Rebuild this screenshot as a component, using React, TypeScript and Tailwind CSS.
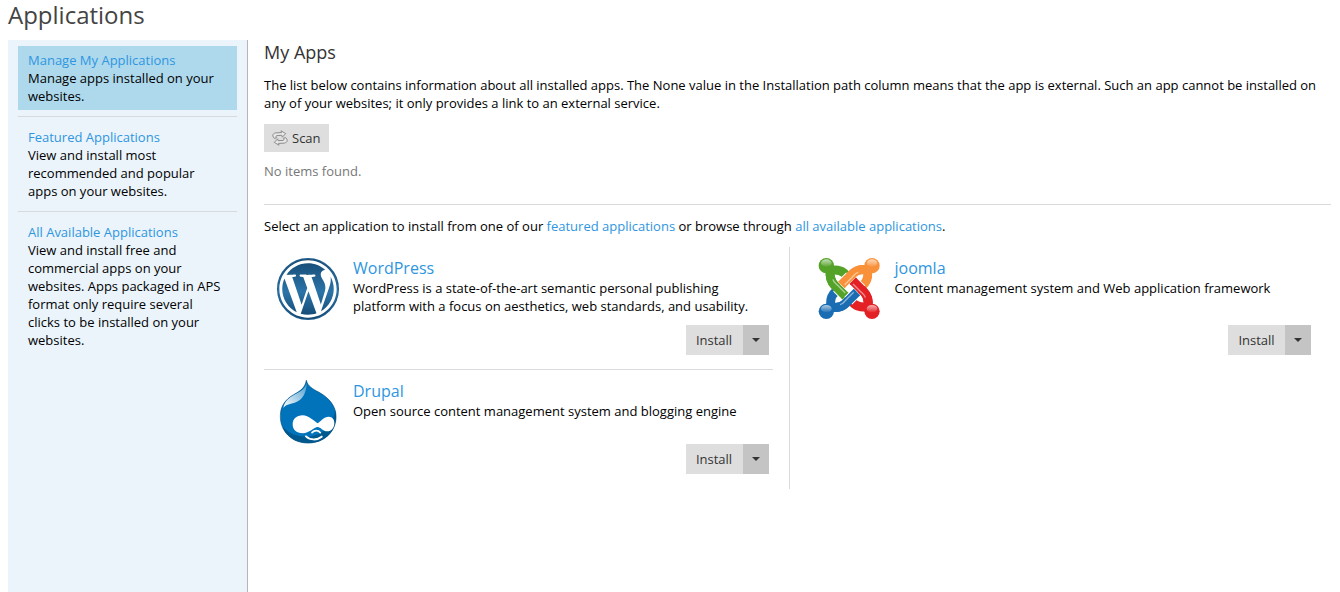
import type { ReactNode } from 'react'
import { FaWordpress } from 'react-icons/fa'

interface NavEntry {
  title: string
  text: string
  active?: boolean
}

interface AppEntry {
  name: string
  text: string
  logo: ReactNode
  left: boolean
  divider: boolean
}

const navEntries: NavEntry[] = [
  {
    title: 'Manage My Applications',
    text: 'Manage apps installed on your websites.',
    active: true,
  },
  {
    title: 'Featured Applications',
    text: 'View and install most recommended and popular apps on your websites.',
  },
  {
    title: 'All Available Applications',
    text: 'View and install free and commercial apps on your websites. Apps packaged in APS format only require several clicks to be installed on your websites.',
  },
]

function WordPressLogo() {
  return (
    <svg viewBox="0 0 64 64" className="size-16" aria-hidden="true">
      <defs>
        <linearGradient id="wp" x1="0" y1="0" x2="0" y2="1">
          <stop offset="0" stopColor="#164a73" />
          <stop offset="0.55" stopColor="#2a74a8" />
          <stop offset="1" stopColor="#13466f" />
        </linearGradient>
      </defs>
      <circle cx="32" cy="32" r="30" fill="#fff" />
      <circle cx="32" cy="32" r="30.2" fill="none" stroke="#1f5e8e" strokeWidth="1.6" />
      <FaWordpress x="1" y="1" size={62} fill="url(#wp)" />
    </svg>
  )
}

function DrupalLogo() {
  return (
    <svg viewBox="24 24 192 192" className="size-16" aria-hidden="true">
      <defs>
        <clipPath id="drop">
          <path d="M115 25C119 43 133 50 153 61C185 79 204 103 204 134C204 180 168 213 120 213C72 213 37 179 37 132C37 103 52 82 77 68C98 56 111 48 115 25Z" />
        </clipPath>
        <linearGradient id="shine" x1="1" y1="0" x2="0" y2="1">
          <stop offset="0" stopColor="#fff" stopOpacity="0.3" />
          <stop offset="1" stopColor="#fff" />
        </linearGradient>
      </defs>
      <g clipPath="url(#drop)">
        <rect x="30" y="20" width="180" height="200" fill="#0073ba" />
        <path d="M204 95C202 150 170 192 118 194C88 195 62 184 44 164C54 200 90 218 125 215C190 212 215 160 204 95Z" fill="#00598e" />
        <path d="M116 33C115 64 104 84 80 92C64 96 52 98 46 108C50 88 63 75 80 67C99 58 112 50 116 33Z" fill="url(#shine)" />
      </g>
      <path d="M115 25C119 43 133 50 153 61C185 79 204 103 204 134C204 180 168 213 120 213C72 213 37 179 37 132C37 103 52 82 77 68C98 56 111 48 115 25Z" fill="none" stroke="#004f80" strokeWidth="2" />
      <path d="M104 130C122 130 138 147 149 154C158 148 168 134 182 134C194 134 199 143 199 153C199 168 190 178 178 178C165 178 157 165 149 165C138 165 124 184 104 184C85 184 74 173 74 157C74 141 86 130 104 130Z" fill="#fff" />
      <path d="M132 182C139 174 151 174 157 182" fill="none" stroke="#fff" strokeWidth="5" strokeLinecap="round" />
      <path d="M114 193C126 205 148 205 161 194" fill="none" stroke="#fff" strokeWidth="6" strokeLinecap="round" />
    </svg>
  )
}

const joomlaArms = [
  { color: '#55a229', angle: 0 },
  { color: '#f9913a', angle: 90 },
  { color: '#e32125', angle: 180 },
  { color: '#1a6db3', angle: 270 },
]

function JoomlaLogo() {
  return (
    <svg viewBox="25 21 192 192" className="size-16" aria-hidden="true">
      <defs>
        <linearGradient id="gloss" x1="0" y1="0" x2="0" y2="1">
          <stop offset="0" stopColor="#fff" stopOpacity="0.65" />
          <stop offset="1" stopColor="#fff" stopOpacity="0.05" />
        </linearGradient>
      </defs>
      {/* the same arm is turned a quarter for each colour, hooks first and bands on top */}
      {joomlaArms.map(({ color, angle }) => (
        <g key={color} transform={`rotate(${angle} 118.5 115.5)`} fill="none">
          <path d="M62 62C59 84 64 95 75 106L107 138" stroke={color} strokeWidth="27" />
          <path d="M58 62C80 57 92 60 102 68L108 74" stroke={color} strokeWidth="27" />
        </g>
      ))}
      {joomlaArms.map(({ color, angle }) => (
        <g key={color} transform={`rotate(${angle} 118.5 115.5)`} fill="none">
          <path d="M82 113L105 136" stroke="#fff" strokeWidth="33" />
          <path d="M62 62C59 84 64 95 75 106L108 139" stroke={color} strokeWidth="27" />
          <path d="M70 88C71 96 77 99 83 105L107 129" stroke="#fff" strokeOpacity="0.5" strokeWidth="4" />
        </g>
      ))}
      {joomlaArms.map(({ color, angle }) => (
        <circle key={color} cx="50" cy="47" r="23" fill={color} transform={`rotate(${angle} 118.5 115.5)`} />
      ))}
      {[[50, 39], [187, 39], [50, 176], [187, 176]].map(([x, y]) => (
        <ellipse key={`${x}-${y}`} cx={x} cy={y} rx="16" ry="11" fill="url(#gloss)" />
      ))}
    </svg>
  )
}

const apps: AppEntry[] = [
  {
    name: 'WordPress',
    text: 'WordPress is a state-of-the-art semantic personal publishing platform with a focus on aesthetics, web standards, and usability.',
    logo: <WordPressLogo />,
    left: true,
    divider: true,
  },
  {
    name: 'joomla',
    text: 'Content management system and Web application framework',
    logo: <JoomlaLogo />,
    left: false,
    divider: false,
  },
  {
    name: 'Drupal',
    text: 'Open source content management system and blogging engine',
    logo: <DrupalLogo />,
    left: true,
    divider: false,
  },
]

function ScanIcon() {
  return (
    <svg viewBox="0 0 16 16" className="size-4" fill="#e8e8e8" stroke="#8c8c8c" strokeLinejoin="round" aria-hidden="true">
      <path d="M2.2 8.300C-.8 5 1.500 2.800 5 2.800L9.500 2.600L9 .8L13.700 3.600L10.300 7.200L9.900 5.300L6 5.500C3.800 5.600 3.300 6.700 4.500 8Z" />
      <path d="M13.800 7.700C16.800 11 14.500 13.200 11 13.200L6.500 13.400L7 15.200L2.300 12.400L5.700 8.800L6.100 10.700L10 10.500C12.200 10.400 12.700 9.300 11.500 8Z" />
    </svg>
  )
}

function AppCard({ app }: { app: AppEntry }) {
  return (
    <div className={`px-4 ${app.left ? 'border-r border-[#dadae0]' : ''}`}>
      <div className={`flex h-full flex-col border-b pt-2.5 pb-3.5 ${app.divider ? 'border-[#dadae0]' : 'border-transparent'}`}>
        <div className="flex flex-1 gap-[13px] pl-3">
          <div className="shrink-0">{app.logo}</div>
          <div className="pr-3 pb-2.5">
            <h3 className="text-base leading-[22px]">
              <a href="#" className="text-[#2e96e0]">{app.name}</a>
            </h3>
            <p>{app.text}</p>
          </div>
        </div>
        <div className="flex justify-end pr-1 text-[#333]">
          <button className="h-[30px] w-[57px] bg-[#dedede]">Install</button>
          <button aria-label={`More options for ${app.name}`} className="flex h-[30px] w-[26px] items-center justify-center bg-[#c4c4c4]">
            <svg viewBox="0 0 8 4" className="h-1 w-2" aria-hidden="true">
              <path d="M0 0H8L4 4Z" fill="#333" />
            </svg>
          </button>
        </div>
      </div>
    </div>
  )
}

export default function App() {
  return (
    <div className="flex min-h-screen flex-col bg-white pl-2 font-['Open_Sans',sans-serif] text-[13px] leading-[18px] text-black">
      <h1 className="pb-2.5 text-2xl leading-[30px] text-[#444]">Applications</h1>

      <div className="flex flex-1">
        <nav className="w-60 shrink-0 border-r border-[#b5b5bb] bg-[#ebf4fb] px-2.5">
          {navEntries.map((entry) => (
            <div key={entry.title} className="border-b border-[#dadada] py-1.5 last:border-b-0">
              <div className={`px-2.5 py-[5px] ${entry.active ? 'bg-[#aed9ec]' : ''}`}>
                <a href="#" className="block text-[#2e96e0]">{entry.title}</a>
                <p>{entry.text}</p>
              </div>
            </div>
          ))}
        </nav>

        <main className="min-w-0 flex-1 pr-[9px] pl-4">
          <h2 className="text-lg leading-6 text-[#333]">My Apps</h2>
          <p className="mt-3">
            The list below contains information about all installed apps. The None value in the Installation path column
            means that the app is external. Such an app cannot be installed on any of your websites; it only provides a
            link to an external service.
          </p>
          <button className="mt-3 flex h-7 items-center gap-1 bg-[#dedede] px-2 text-[#333]">
            <ScanIcon />
            Scan
          </button>
          <p className="mt-2.5 text-[#777]">No items found.</p>

          <section className="mt-6 border-t border-[#dadada] pt-3">
            <p>
              Select an application to install from one of our{' '}
              <a href="#" className="text-[#2e96e0]">featured applications</a> or browse through{' '}
              <a href="#" className="text-[#2e96e0]">all available applications</a>.
            </p>
            <div className="mt-3 -ml-4 grid grid-cols-2">
              {apps.map((app) => (
                <AppCard key={app.name} app={app} />
              ))}
            </div>
          </section>
        </main>
      </div>
    </div>
  )
}
